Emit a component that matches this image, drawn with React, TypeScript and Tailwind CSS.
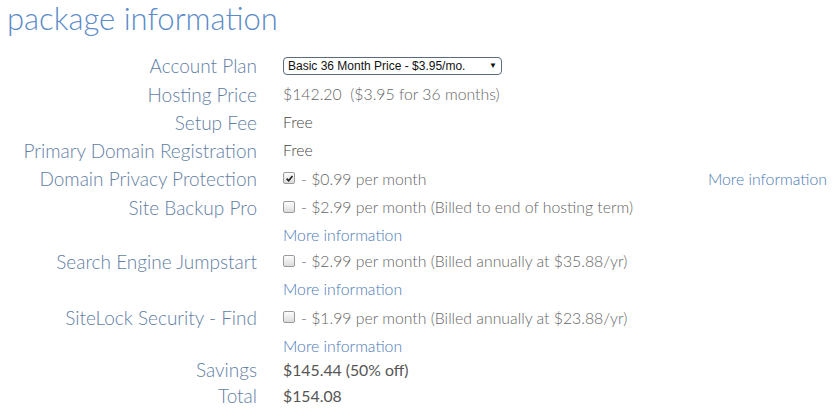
import React from 'react';

interface RowProps {
  label?: string;
  children?: React.ReactNode;
  h: string;
}

const Row: React.FC<RowProps> = ({ label, children, h }) => (
  <div className={`flex items-center ${h}`}>
    <div className="w-[257px] shrink-0 text-right text-[19px] text-[#5f7ea3] leading-none">{label}</div>
    <div className="ml-[26px] flex flex-1 items-center text-[15.8px] text-[#666] leading-none">{children}</div>
  </div>
);

const Box: React.FC<{ checked?: boolean }> = ({ checked }) => (
  <span className="mr-[6px] inline-flex h-[12px] w-[12px] items-center justify-center rounded-[2px] border border-[#9a9a9a] bg-gradient-to-b from-[#fdfdfd] to-[#dcdcdc]">
    {checked && (
      <svg viewBox="0 0 10 10" className="h-[9px] w-[9px]">
        <path d="M1.8 5.2 L4 7.5 L8.3 2.3" fill="none" stroke="#222" strokeWidth="1.8" />
      </svg>
    )}
  </span>
);

const More: React.FC = () => (
  <span className="text-[#4a79b5]">More information</span>
);

export default function App() {
  return (
    <div className="h-[413px] w-[833px] overflow-hidden bg-white font-['Lato',sans-serif] font-light">
      <h1 className="pl-[7px] text-[31px] leading-[37px] text-[#5b8bc8]">package information</h1>
      <div className="mt-[14px]">
        <Row label="Account Plan" h="h-[29px]">
          <div className="flex h-[18px] w-[219px] items-center justify-between rounded-[4px] border border-[#5a6a80] px-[4px] font-['Liberation_Sans',sans-serif] text-[12px] font-normal text-[#111]">
            <span>Basic 36 Month Price - $3.95/mo.</span>
            <span className="text-[8px]">▼</span>
          </div>
        </Row>
        <Row label="Hosting Price" h="h-[28px]">
          <span>$142.20&nbsp;&nbsp;($3.95 for 36 months)</span>
        </Row>
        <Row label="Setup Fee" h="h-[28px]">
          <span className="text-[#444]">Free</span>
        </Row>
        <Row label="Primary Domain Registration" h="h-[28px]">
          <span className="text-[#444]">Free</span>
        </Row>
        <Row label="Domain Privacy Protection" h="h-[29px]">
          <Box checked />
          <span>- $0.99 per month</span>
          <span className="ml-auto mr-[6px]"><More /></span>
        </Row>
        <Row label="Site Backup Pro" h="h-[28px]">
          <Box />
          <span>- $2.99 per month (Billed to end of hosting term)</span>
        </Row>
        <Row h="h-[27px]">
          <More />
        </Row>
        <Row label="Search Engine Jumpstart" h="h-[26px]">
          <Box />
          <span>- $2.99 per month (Billed annually at $35.88/yr)</span>
        </Row>
        <Row h="h-[29px]">
          <More />
        </Row>
        <Row label="SiteLock Security - Find" h="h-[29px]">
          <Box />
          <span>- $1.99 per month (Billed annually at $23.88/yr)</span>
        </Row>
        <Row h="h-[27px]">
          <More />
        </Row>
        <Row label="Savings" h="h-[21px]">
          <span className="font-normal text-[#555]">$145.44 (50% off)</span>
        </Row>
        <Row label="Total" h="h-[31px]">
          <span className="font-normal text-[#555]">$154.08</span>
        </Row>
      </div>
    </div>
  );
}
